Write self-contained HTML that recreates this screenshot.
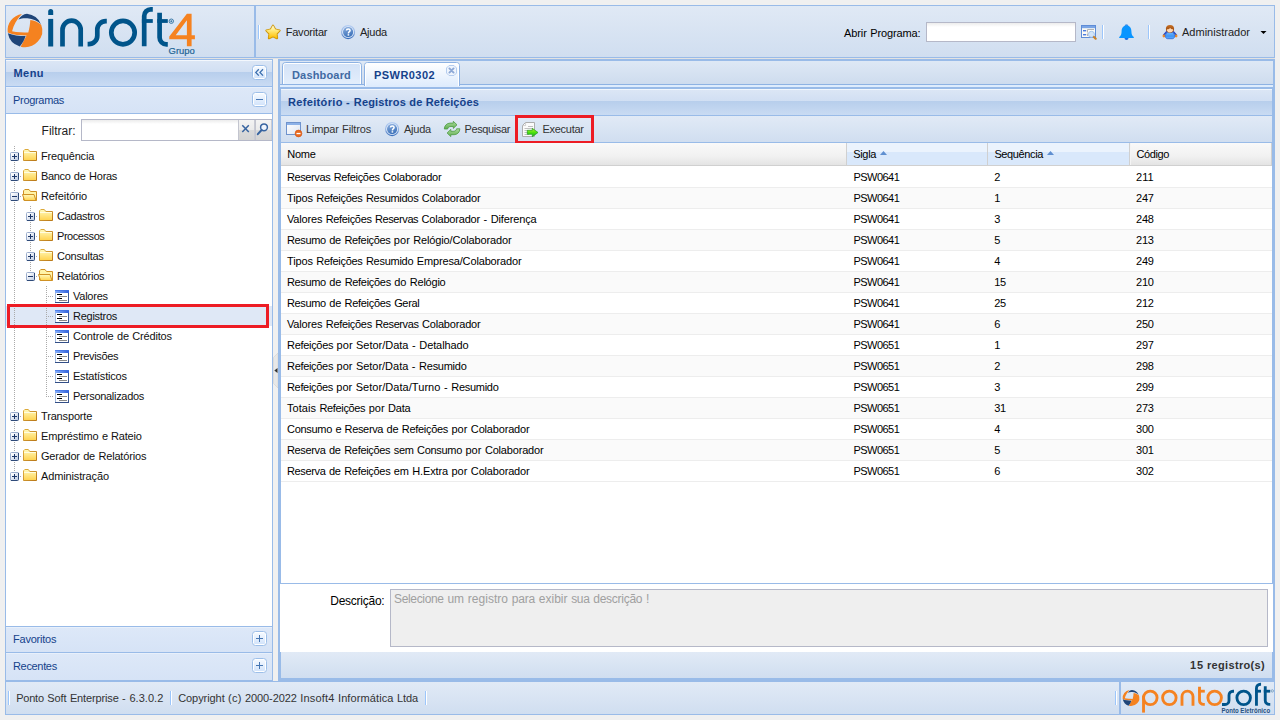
<!DOCTYPE html>
<html><head><meta charset="utf-8"><title>Ponto Soft Enterprise</title>
<style>
html,body{margin:0;padding:0;}
body{width:1280px;height:720px;overflow:hidden;background:#f0f0f0;position:relative;font-family:"Liberation Sans",sans-serif;}
div{box-sizing:content-box;}
.t{position:absolute;white-space:pre;font-family:"Liberation Sans",sans-serif;}
.a{position:absolute;display:block;overflow:visible;}
</style></head><body>
<div style="position:absolute;left:5px;top:5px;width:1268px;height:51px;border:1px solid #99bbe8;background:linear-gradient(#e0e9f5,#d0def0);"></div>
<div style="position:absolute;left:254px;top:6px;width:2px;height:51px;background:#99bbe8;"></div>
<div style="position:absolute;left:5px;top:58px;width:1270px;height:1px;background:#e2e2e2;"></div>
<svg class="a" style="left:0px;top:0px" width="200" height="58"><path fill="#f58220" d="M30.3 19.9 C34 20.3 38.3 21.8 41.2 24.7 A17.6 16.7 0 0 1 20.6 46.7 L26.6 35.4 C20 35.4 13 34.8 7.72 32.4 A17 16.7 0 0 1 21.9 13.91 C17 19 13.4 25 12.1 31.2 C17 32.2 23 32.5 28.3 32.5 C29.5 28 30.1 24 30.3 19.9 Z"/><path fill="#1f4579" d="M18.4 19.4 C20.5 16.5 23.5 14.2 27 13.86 A17.6 16.7 0 0 1 40.94 24.2 C38 20.8 33 19 27.5 18.3 C24 18 21 18.5 18.4 19.4 Z"/><path fill="#1f4579" d="M7.86 33.3 C13 35.4 19 36.1 25.6 36.1 C24.5 40 22.5 43.5 19.8 46.42 A17 16.7 0 0 1 7.86 33.3 Z"/><path fill="#00548a" d="M48.2 15 V11.4 a2.5 2.5 0 0 1 5 0 V15 Z"/><rect x="48.2" y="18.9" width="5" height="27.6" fill="#00548a"/><path fill="none" stroke="#00548a" stroke-width="4.7" d="M62.5 46.5 V29.8 a9.1 9.1 0 0 1 18.2 0 V46.5"/><path fill="none" stroke="#00548a" stroke-width="4.7" d="M106.8 21.2 h-1 a8.5 8.5 0 0 0 -8.5 8.5 v6 a8.5 8.5 0 0 1 -8.5 8.5 h-1.2"/><circle cx="123" cy="32.6" r="11.7" fill="none" stroke="#00548a" stroke-width="4.7"/><path fill="none" stroke="#00548a" stroke-width="4.7" d="M144.2 46.3 V16 a6.7 6.7 0 0 1 6.7 -6.7 h1.9"/><rect x="141.9" y="19.1" width="10.9" height="3.8" fill="#00548a"/><path fill="none" stroke="#00548a" stroke-width="4.7" d="M159.6 12.8 V37.5 a6.8 6.8 0 0 0 6.8 6.8 h1.4"/><rect x="157.3" y="19.1" width="10.5" height="3.8" fill="#00548a"/><circle cx="171.3" cy="21.2" r="2.2" fill="none" stroke="#3a7aa8" stroke-width="1"/><circle cx="171.3" cy="21.2" r="1" fill="#3a7aa8"/><path fill="#f58220" d="M186.9 13.7 h4.7 v21.6 h3.3 v3.9 h-3.3 v7 h-4.7 v-7 h-17.6 v-2.6 Z M186.9 20.3 L175.7 35.3 h11.2 Z"/><text x="168.6" y="53.8" font-family="Liberation Sans,sans-serif" font-size="8.8" fill="#1f6596" stroke="#1f6596" stroke-width="0.2" textLength="26.2" lengthAdjust="spacingAndGlyphs">Grupo</text></svg>
<div style="position:absolute;left:258px;top:25px;width:1px;height:14px;background:#9cc6fb;"></div>
<div style="position:absolute;left:259px;top:25px;width:1px;height:14px;background:#fff;"></div>
<svg class="a" style="left:265px;top:24px" width="16" height="16"><defs><linearGradient id="g1" x1="0" y1="0" x2="0" y2="1"><stop offset="0" stop-color="#fffde0"/><stop offset="0.4" stop-color="#ffe979"/><stop offset="1" stop-color="#ffbf00"/></linearGradient></defs><path d="M8.00 1.70 L10.17 5.61 L14.56 6.47 L11.52 9.74 L12.06 14.18 L8.00 12.30 L3.94 14.18 L4.48 9.74 L1.44 6.47 L5.83 5.61 Z" fill="#cc9306" stroke="#cc9306" stroke-width="2.2" stroke-linejoin="round"/><path d="M8.00 1.70 L10.17 5.61 L14.56 6.47 L11.52 9.74 L12.06 14.18 L8.00 12.30 L3.94 14.18 L4.48 9.74 L1.44 6.47 L5.83 5.61 Z" fill="url(#g1)" stroke="url(#g1)" stroke-width="0.5" stroke-linejoin="round"/></svg>
<span class="t" style="left:285.70px;top:26px;font-size:11px;line-height:13px;color:#222;letter-spacing:-0.204px;">Favoritar</span>
<svg class="a" style="left:341px;top:25px" width="15" height="15"><defs><linearGradient id="g2" x1="0" y1="0" x2="0.3" y2="1"><stop offset="0" stop-color="#8db0e0"/><stop offset="1" stop-color="#3f74bb"/></linearGradient><linearGradient id="g3" x1="0" y1="0" x2="0" y2="1"><stop offset="0" stop-color="#b4cdf2"/><stop offset="0.55" stop-color="#8fb0e2"/><stop offset="1" stop-color="#3a6fbc"/></linearGradient></defs><circle cx="7.1" cy="7.1" r="6.5" fill="#e2ecf9" stroke="url(#g3)" stroke-width="1.1"/><circle cx="7.1" cy="7.1" r="5.1" fill="url(#g2)"/><path d="M5.5 5.6 C5.5 4.5 6.2 3.9 7.3 3.9 C8.4 3.9 9.1 4.5 9.1 5.4 C9.1 6.2 8.6 6.5 8.1 6.9 C7.6 7.3 7.4 7.6 7.4 8.4" fill="none" stroke="#fff" stroke-width="1.5"/><rect x="6.6" y="9.2" width="1.6" height="1.4" fill="#fff"/></svg>
<span class="t" style="left:360.00px;top:26px;font-size:11px;line-height:13px;color:#222;letter-spacing:-0.229px;">Ajuda</span>
<span class="t" style="left:843.90px;top:27px;font-size:11px;line-height:13px;color:#000;letter-spacing:-0.068px;">Abrir</span><span class="t" style="left:870.19px;top:27px;font-size:11px;line-height:13px;color:#000;letter-spacing:-0.128px;">Programa:</span>
<div style="position:absolute;left:926px;top:22px;width:148px;height:18px;border:1px solid #b5b8c8;background:linear-gradient(#ececec 0,#fff 4px,#fff);"></div>
<svg class="a" style="left:1081px;top:25px" width="17" height="16"><rect x="0.5" y="0.5" width="14" height="12" fill="#fbfaf5" stroke="#5e8cd6"/><rect x="1" y="1" width="13" height="2.2" fill="#7aa5e6"/><rect x="2" y="5" width="3.2" height="1.4" fill="#4a7ade"/><rect x="2" y="9" width="3.2" height="1.4" fill="#4a7ade"/><path d="M6.5 7.5 V4.5 H13 M6.5 11 V8.5" fill="none" stroke="#b4b4b4" stroke-width="1"/><circle cx="10.4" cy="9.3" r="3" fill="#d2e4f8" stroke="#a3c4ec" stroke-width="1"/><path d="M13 12 L14.7 13.7" stroke="#c98228" stroke-width="2.2" stroke-linecap="round"/></svg>
<div style="position:absolute;left:1102px;top:25px;width:1px;height:14px;background:#9cc6fb;"></div>
<div style="position:absolute;left:1103px;top:25px;width:1px;height:14px;background:#fff;"></div>
<svg class="a" style="left:1119px;top:24px" width="15" height="17"><circle cx="7.5" cy="2.2" r="1.9" fill="#4a8fe6"/><path d="M7.5 1.6 C10.8 1.6 12.3 4.2 12.4 7.2 C12.5 10 13 11.6 14.8 12.9 V14 H0.2 V12.9 C2 11.6 2.5 10 2.6 7.2 C2.7 4.2 4.2 1.6 7.5 1.6 Z" fill="#0a95ff"/><path d="M5.5 14 h4 a2 2 0 0 1 -4 0 Z" fill="#1a6fe8"/></svg>
<div style="position:absolute;left:1148px;top:25px;width:1px;height:14px;background:#9cc6fb;"></div>
<div style="position:absolute;left:1149px;top:25px;width:1px;height:14px;background:#fff;"></div>
<svg class="a" style="left:1162px;top:24px" width="16" height="17"><defs><linearGradient id="g4" x1="0" y1="0" x2="0" y2="1"><stop offset="0" stop-color="#6cb8ff"/><stop offset="0.6" stop-color="#3f94f5"/><stop offset="1" stop-color="#5fb0ff"/></linearGradient><linearGradient id="g5" x1="0" y1="0" x2="0" y2="1"><stop offset="0" stop-color="#c87024"/><stop offset="1" stop-color="#8c3c08"/></linearGradient></defs><path d="M4.6 7.7 L1.7 11 M11.4 7.7 L14.3 11" stroke="#2348c4" stroke-width="1.5" stroke-linecap="round"/><circle cx="1.9" cy="12" r="1.4" fill="#ee8a28"/><circle cx="14.1" cy="12" r="1.4" fill="#ee8a28"/><path d="M5.2 8.3 H10.8 L12.7 11 C13 13 12 14.7 10.5 14.7 H5.5 C4 14.7 3 13 3.3 11 Z" fill="url(#g4)" stroke="#2458cc" stroke-width="0.7"/><ellipse cx="8" cy="4.8" rx="4.1" ry="3.9" fill="url(#g5)"/><path d="M4.9 5.2 C6 5.4 7.3 4.9 8.2 4 C8.8 4.9 10 5.4 11.1 5.3 C11.3 7.3 9.8 8.6 8 8.6 C6.2 8.6 4.7 7.3 4.9 5.2 Z" fill="#fcd9b6"/></svg>
<span class="t" style="left:1182.00px;top:26px;font-size:11px;line-height:13px;color:#222;letter-spacing:0.011px;">Administrador</span>
<svg class="a" style="left:1260px;top:31px" width="7" height="4"><path d="M0.5 0h6L3.5 3z" fill="#000"/></svg>
<div style="position:absolute;left:5px;top:59px;width:266px;height:620px;border:1px solid #99bbe8;background:#fff;"></div>
<div style="position:absolute;left:6px;top:60px;width:266px;height:26px;background:linear-gradient(#dbe6f5 0,#d1dff3 11px,#b7ceec 11px,#c9dbf3 100%);border-top:1px solid #f4f8fd;box-sizing:border-box;"></div>
<div style="position:absolute;left:6px;top:86px;width:266px;height:1px;background:#99bbe8;"></div>
<span class="t" style="left:13.50px;top:67px;font-size:11px;line-height:13px;color:#15428b;font-weight:bold;letter-spacing:0.445px;">Menu</span>
<svg class="a" style="left:252px;top:65px" width="15" height="15"><rect x="0.5" y="0.5" width="14" height="14" rx="3" ry="3" fill="#fff" stroke="#9dbfe9"/><defs><linearGradient id="g6" x1="0" y1="0" x2="0" y2="1"><stop offset="0" stop-color="#f4f9ff"/><stop offset="1" stop-color="#d3e4fb"/></linearGradient></defs><rect x="2" y="2" width="11" height="11" rx="1" fill="url(#g6)"/><path d="M6.8 4.2 L3.8 7.4 L6.8 10.6 M11 4.2 L8 7.4 L11 10.6" fill="none" stroke="#3b6fae" stroke-width="1.3"/></svg>
<div style="position:absolute;left:6px;top:87px;width:266px;height:26px;background:linear-gradient(#dde8f8,#d6e3f6);border-top:1px solid #e8f0fb;box-sizing:border-box;"></div>
<div style="position:absolute;left:6px;top:113px;width:266px;height:1px;background:#99bbe8;"></div>
<span class="t" style="left:13.00px;top:94px;font-size:11px;line-height:13px;color:#15428b;letter-spacing:-0.311px;">Programas</span>
<svg class="a" style="left:252px;top:92px" width="15" height="15"><rect x="0.5" y="0.5" width="14" height="14" rx="3" ry="3" fill="#fff" stroke="#9dbfe9"/><defs><linearGradient id="g7" x1="0" y1="0" x2="0" y2="1"><stop offset="0" stop-color="#f4f9ff"/><stop offset="1" stop-color="#d3e4fb"/></linearGradient></defs><rect x="2" y="2" width="11" height="11" rx="1" fill="url(#g7)"/><rect x="4" y="7" width="7" height="1" fill="#4878b6"/></svg>
<span class="t" style="left:41.60px;top:124px;font-size:12px;line-height:14px;color:#222;letter-spacing:-0.013px;">Filtrar:</span>
<div style="position:absolute;left:81px;top:119px;width:156px;height:20px;border:1px solid #b5b8c8;background:linear-gradient(#ececec 0,#fff 4px,#fff);"></div>
<svg class="a" style="left:238px;top:119px" width="17" height="22"><defs><linearGradient id="g8" x1="0" y1="0" x2="0" y2="1"><stop offset="0" stop-color="#f4f4f4"/><stop offset="0.48" stop-color="#ebebeb"/><stop offset="0.52" stop-color="#dadada"/><stop offset="1" stop-color="#d3d3d3"/></linearGradient></defs><rect x="0" y="0" width="17" height="22" fill="url(#g8)"/><rect x="0" y="0" width="17" height="1" fill="#b5b8c8"/><rect x="0" y="21" width="17" height="1" fill="#b5b8c8"/><rect x="0" y="1" width="1" height="20" fill="#c3c5cf"/><rect x="16" y="1" width="1" height="20" fill="#c9cbd4"/><path d="M4.3 6.3 L10.8 13 M10.8 6.3 L4.3 13" stroke="#3764a0" stroke-width="1.5"/></svg>
<svg class="a" style="left:255px;top:119px" width="17" height="22"><defs><linearGradient id="g9" x1="0" y1="0" x2="0" y2="1"><stop offset="0" stop-color="#f4f4f4"/><stop offset="0.48" stop-color="#ebebeb"/><stop offset="0.52" stop-color="#dadada"/><stop offset="1" stop-color="#d3d3d3"/></linearGradient></defs><rect x="0" y="0" width="17" height="22" fill="url(#g9)"/><rect x="0" y="0" width="17" height="1" fill="#b5b8c8"/><rect x="0" y="21" width="17" height="1" fill="#b5b8c8"/><rect x="0" y="1" width="1" height="20" fill="#c3c5cf"/><rect x="16" y="1" width="1" height="20" fill="#c9cbd4"/><circle cx="9" cy="8.3" r="3.4" fill="#eef4fc" stroke="#3764a0" stroke-width="1.5"/><path d="M6.6 11 L2.8 15.2" stroke="#3764a0" stroke-width="2" stroke-linecap="round"/></svg>
<div style="position:absolute;left:6px;top:306px;width:266px;height:20px;background:#dfe8f6;"></div>
<div style="position:absolute;left:14px;top:146px;width:1px;height:326px;background-image:linear-gradient(#aaa 50%,transparent 50%);background-size:1px 2px;"></div>
<div style="position:absolute;left:30px;top:206px;width:1px;height:66px;background-image:linear-gradient(#aaa 50%,transparent 50%);background-size:1px 2px;"></div>
<div style="position:absolute;left:46px;top:286px;width:1px;height:111px;background-image:linear-gradient(#aaa 50%,transparent 50%);background-size:1px 2px;"></div>
<div style="position:absolute;left:20px;top:156px;width:1px;height:1px;background:#aaa;"></div>
<svg class="a" style="left:10px;top:152px" width="9" height="9"><defs><linearGradient id="g10" x1="0" y1="0" x2="1" y2="1"><stop offset="0.15" stop-color="#fff"/><stop offset="1" stop-color="#b9c7e0"/></linearGradient></defs><rect x="0.5" y="0.5" width="8" height="8" rx="1" fill="url(#g10)"/><path d="M0.5 8 V1.5 Q0.5 0.5 1.5 0.5 H8" fill="none" stroke="#9badcd"/><path d="M8.5 0.8 V7.5 Q8.5 8.5 7.5 8.5 H0.8" fill="none" stroke="#2f4b7a"/><rect x="2" y="4" width="5" height="1" fill="#1d3768"/><rect x="4" y="2" width="1" height="5" fill="#1d3768"/></svg>
<svg class="a" style="left:22px;top:148px" width="16" height="16"><defs><linearGradient id="g11" x1="0" y1="0" x2="0" y2="1"><stop offset="0" stop-color="#fffbc0"/><stop offset="1" stop-color="#ffd24d"/></linearGradient><linearGradient id="g12" x1="0" y1="0" x2="1" y2="1"><stop offset="0" stop-color="#e0b040"/><stop offset="1" stop-color="#b9781a"/></linearGradient></defs><path d="M1.5 12.5 V2.8 L2.8 1.5 H6.3 L7.8 3.5 H14.5 V12.5 Z" fill="url(#g11)" stroke="url(#g12)" stroke-linejoin="round"/><path d="M2 4.5 H14" stroke="#fffde0" stroke-width="1"/></svg>
<span class="t" style="left:41.00px;top:150px;font-size:11px;line-height:13px;color:#111;letter-spacing:-0.194px;">Frequência</span>
<div style="position:absolute;left:20px;top:176px;width:1px;height:1px;background:#aaa;"></div>
<svg class="a" style="left:10px;top:172px" width="9" height="9"><defs><linearGradient id="g13" x1="0" y1="0" x2="1" y2="1"><stop offset="0.15" stop-color="#fff"/><stop offset="1" stop-color="#b9c7e0"/></linearGradient></defs><rect x="0.5" y="0.5" width="8" height="8" rx="1" fill="url(#g13)"/><path d="M0.5 8 V1.5 Q0.5 0.5 1.5 0.5 H8" fill="none" stroke="#9badcd"/><path d="M8.5 0.8 V7.5 Q8.5 8.5 7.5 8.5 H0.8" fill="none" stroke="#2f4b7a"/><rect x="2" y="4" width="5" height="1" fill="#1d3768"/><rect x="4" y="2" width="1" height="5" fill="#1d3768"/></svg>
<svg class="a" style="left:22px;top:168px" width="16" height="16"><defs><linearGradient id="g14" x1="0" y1="0" x2="0" y2="1"><stop offset="0" stop-color="#fffbc0"/><stop offset="1" stop-color="#ffd24d"/></linearGradient><linearGradient id="g15" x1="0" y1="0" x2="1" y2="1"><stop offset="0" stop-color="#e0b040"/><stop offset="1" stop-color="#b9781a"/></linearGradient></defs><path d="M1.5 12.5 V2.8 L2.8 1.5 H6.3 L7.8 3.5 H14.5 V12.5 Z" fill="url(#g14)" stroke="url(#g15)" stroke-linejoin="round"/><path d="M2 4.5 H14" stroke="#fffde0" stroke-width="1"/></svg>
<span class="t" style="left:41.00px;top:170px;font-size:11px;line-height:13px;color:#111;letter-spacing:-0.361px;">Banco</span><span class="t" style="left:73.82px;top:170px;font-size:11px;line-height:13px;color:#111;letter-spacing:-0.193px;">de</span><span class="t" style="left:89.11px;top:170px;font-size:11px;line-height:13px;color:#111;letter-spacing:-0.270px;">Horas</span>
<div style="position:absolute;left:20px;top:196px;width:1px;height:1px;background:#aaa;"></div>
<svg class="a" style="left:10px;top:192px" width="9" height="9"><defs><linearGradient id="g16" x1="0" y1="0" x2="1" y2="1"><stop offset="0.15" stop-color="#fff"/><stop offset="1" stop-color="#b9c7e0"/></linearGradient></defs><rect x="0.5" y="0.5" width="8" height="8" rx="1" fill="url(#g16)"/><path d="M0.5 8 V1.5 Q0.5 0.5 1.5 0.5 H8" fill="none" stroke="#9badcd"/><path d="M8.5 0.8 V7.5 Q8.5 8.5 7.5 8.5 H0.8" fill="none" stroke="#2f4b7a"/><rect x="2" y="4" width="5" height="1" fill="#1d3768"/></svg>
<svg class="a" style="left:22px;top:188px" width="16" height="16"><defs><linearGradient id="g17" x1="0" y1="0" x2="0" y2="1"><stop offset="0" stop-color="#fffbc0"/><stop offset="1" stop-color="#ffd24d"/></linearGradient></defs><path d="M1.5 12 V2.8 L2.8 1.5 H7 L8.5 3.5 H14.5 V12.5 H2 Z" fill="#fff3a8" stroke="#cf9124" stroke-linejoin="round"/><path d="M0.5 6.5 H12 L14 12.5 H2.5 Z" fill="url(#g17)" stroke="#cf9124" stroke-linejoin="round"/></svg>
<span class="t" style="left:41.00px;top:190px;font-size:11px;line-height:13px;color:#111;letter-spacing:-0.098px;">Refeitório</span>
<div style="position:absolute;left:36px;top:216px;width:1px;height:1px;background:#aaa;"></div>
<svg class="a" style="left:26px;top:212px" width="9" height="9"><defs><linearGradient id="g18" x1="0" y1="0" x2="1" y2="1"><stop offset="0.15" stop-color="#fff"/><stop offset="1" stop-color="#b9c7e0"/></linearGradient></defs><rect x="0.5" y="0.5" width="8" height="8" rx="1" fill="url(#g18)"/><path d="M0.5 8 V1.5 Q0.5 0.5 1.5 0.5 H8" fill="none" stroke="#9badcd"/><path d="M8.5 0.8 V7.5 Q8.5 8.5 7.5 8.5 H0.8" fill="none" stroke="#2f4b7a"/><rect x="2" y="4" width="5" height="1" fill="#1d3768"/><rect x="4" y="2" width="1" height="5" fill="#1d3768"/></svg>
<svg class="a" style="left:38px;top:208px" width="16" height="16"><defs><linearGradient id="g19" x1="0" y1="0" x2="0" y2="1"><stop offset="0" stop-color="#fffbc0"/><stop offset="1" stop-color="#ffd24d"/></linearGradient><linearGradient id="g20" x1="0" y1="0" x2="1" y2="1"><stop offset="0" stop-color="#e0b040"/><stop offset="1" stop-color="#b9781a"/></linearGradient></defs><path d="M1.5 12.5 V2.8 L2.8 1.5 H6.3 L7.8 3.5 H14.5 V12.5 Z" fill="url(#g19)" stroke="url(#g20)" stroke-linejoin="round"/><path d="M2 4.5 H14" stroke="#fffde0" stroke-width="1"/></svg>
<span class="t" style="left:57.00px;top:210px;font-size:11px;line-height:13px;color:#111;letter-spacing:-0.304px;">Cadastros</span>
<div style="position:absolute;left:36px;top:236px;width:1px;height:1px;background:#aaa;"></div>
<svg class="a" style="left:26px;top:232px" width="9" height="9"><defs><linearGradient id="g21" x1="0" y1="0" x2="1" y2="1"><stop offset="0.15" stop-color="#fff"/><stop offset="1" stop-color="#b9c7e0"/></linearGradient></defs><rect x="0.5" y="0.5" width="8" height="8" rx="1" fill="url(#g21)"/><path d="M0.5 8 V1.5 Q0.5 0.5 1.5 0.5 H8" fill="none" stroke="#9badcd"/><path d="M8.5 0.8 V7.5 Q8.5 8.5 7.5 8.5 H0.8" fill="none" stroke="#2f4b7a"/><rect x="2" y="4" width="5" height="1" fill="#1d3768"/><rect x="4" y="2" width="1" height="5" fill="#1d3768"/></svg>
<svg class="a" style="left:38px;top:228px" width="16" height="16"><defs><linearGradient id="g22" x1="0" y1="0" x2="0" y2="1"><stop offset="0" stop-color="#fffbc0"/><stop offset="1" stop-color="#ffd24d"/></linearGradient><linearGradient id="g23" x1="0" y1="0" x2="1" y2="1"><stop offset="0" stop-color="#e0b040"/><stop offset="1" stop-color="#b9781a"/></linearGradient></defs><path d="M1.5 12.5 V2.8 L2.8 1.5 H6.3 L7.8 3.5 H14.5 V12.5 Z" fill="url(#g22)" stroke="url(#g23)" stroke-linejoin="round"/><path d="M2 4.5 H14" stroke="#fffde0" stroke-width="1"/></svg>
<span class="t" style="left:57.00px;top:230px;font-size:11px;line-height:13px;color:#111;letter-spacing:-0.439px;">Processos</span>
<div style="position:absolute;left:36px;top:256px;width:1px;height:1px;background:#aaa;"></div>
<svg class="a" style="left:26px;top:252px" width="9" height="9"><defs><linearGradient id="g24" x1="0" y1="0" x2="1" y2="1"><stop offset="0.15" stop-color="#fff"/><stop offset="1" stop-color="#b9c7e0"/></linearGradient></defs><rect x="0.5" y="0.5" width="8" height="8" rx="1" fill="url(#g24)"/><path d="M0.5 8 V1.5 Q0.5 0.5 1.5 0.5 H8" fill="none" stroke="#9badcd"/><path d="M8.5 0.8 V7.5 Q8.5 8.5 7.5 8.5 H0.8" fill="none" stroke="#2f4b7a"/><rect x="2" y="4" width="5" height="1" fill="#1d3768"/><rect x="4" y="2" width="1" height="5" fill="#1d3768"/></svg>
<svg class="a" style="left:38px;top:248px" width="16" height="16"><defs><linearGradient id="g25" x1="0" y1="0" x2="0" y2="1"><stop offset="0" stop-color="#fffbc0"/><stop offset="1" stop-color="#ffd24d"/></linearGradient><linearGradient id="g26" x1="0" y1="0" x2="1" y2="1"><stop offset="0" stop-color="#e0b040"/><stop offset="1" stop-color="#b9781a"/></linearGradient></defs><path d="M1.5 12.5 V2.8 L2.8 1.5 H6.3 L7.8 3.5 H14.5 V12.5 Z" fill="url(#g25)" stroke="url(#g26)" stroke-linejoin="round"/><path d="M2 4.5 H14" stroke="#fffde0" stroke-width="1"/></svg>
<span class="t" style="left:57.00px;top:250px;font-size:11px;line-height:13px;color:#111;letter-spacing:-0.268px;">Consultas</span>
<div style="position:absolute;left:36px;top:276px;width:1px;height:1px;background:#aaa;"></div>
<svg class="a" style="left:26px;top:272px" width="9" height="9"><defs><linearGradient id="g27" x1="0" y1="0" x2="1" y2="1"><stop offset="0.15" stop-color="#fff"/><stop offset="1" stop-color="#b9c7e0"/></linearGradient></defs><rect x="0.5" y="0.5" width="8" height="8" rx="1" fill="url(#g27)"/><path d="M0.5 8 V1.5 Q0.5 0.5 1.5 0.5 H8" fill="none" stroke="#9badcd"/><path d="M8.5 0.8 V7.5 Q8.5 8.5 7.5 8.5 H0.8" fill="none" stroke="#2f4b7a"/><rect x="2" y="4" width="5" height="1" fill="#1d3768"/></svg>
<svg class="a" style="left:38px;top:268px" width="16" height="16"><defs><linearGradient id="g28" x1="0" y1="0" x2="0" y2="1"><stop offset="0" stop-color="#fffbc0"/><stop offset="1" stop-color="#ffd24d"/></linearGradient></defs><path d="M1.5 12 V2.8 L2.8 1.5 H7 L8.5 3.5 H14.5 V12.5 H2 Z" fill="#fff3a8" stroke="#cf9124" stroke-linejoin="round"/><path d="M0.5 6.5 H12 L14 12.5 H2.5 Z" fill="url(#g28)" stroke="#cf9124" stroke-linejoin="round"/></svg>
<span class="t" style="left:57.00px;top:270px;font-size:11px;line-height:13px;color:#111;letter-spacing:-0.212px;">Relatórios</span>
<div style="position:absolute;left:48px;top:296px;width:6px;height:1px;background-image:linear-gradient(90deg,#aaa 50%,transparent 50%);background-size:2px 1px;"></div>
<svg class="a" style="left:54px;top:288px" width="16" height="16"><defs><linearGradient id="g29" x1="0" y1="0" x2="1" y2="0"><stop offset="0" stop-color="#86aef8"/><stop offset="1" stop-color="#2f60dc"/></linearGradient></defs><rect x="1" y="2" width="14" height="13" fill="#fff"/><rect x="1" y="2" width="14" height="3" fill="url(#g29)"/><rect x="1" y="2" width="14" height="1" fill="#3f6fe2" opacity="0.7"/><rect x="1" y="5" width="1" height="10" fill="#a3b8da"/><rect x="14" y="5" width="1" height="10" fill="#3d5994"/><rect x="1" y="14" width="14" height="1" fill="#324e86"/><rect x="3" y="6" width="5" height="1" fill="#000"/><rect x="5" y="8" width="8" height="1" fill="#8a8a8a"/><rect x="3" y="10" width="5" height="1" fill="#000"/><rect x="5" y="12" width="8" height="1" fill="#8a8a8a"/></svg>
<span class="t" style="left:73.00px;top:290px;font-size:11px;line-height:13px;color:#111;letter-spacing:-0.240px;">Valores</span>
<div style="position:absolute;left:48px;top:316px;width:6px;height:1px;background-image:linear-gradient(90deg,#aaa 50%,transparent 50%);background-size:2px 1px;"></div>
<svg class="a" style="left:54px;top:308px" width="16" height="16"><defs><linearGradient id="g30" x1="0" y1="0" x2="1" y2="0"><stop offset="0" stop-color="#86aef8"/><stop offset="1" stop-color="#2f60dc"/></linearGradient></defs><rect x="1" y="2" width="14" height="13" fill="#fff"/><rect x="1" y="2" width="14" height="3" fill="url(#g30)"/><rect x="1" y="2" width="14" height="1" fill="#3f6fe2" opacity="0.7"/><rect x="1" y="5" width="1" height="10" fill="#a3b8da"/><rect x="14" y="5" width="1" height="10" fill="#3d5994"/><rect x="1" y="14" width="14" height="1" fill="#324e86"/><rect x="3" y="6" width="5" height="1" fill="#000"/><rect x="5" y="8" width="8" height="1" fill="#8a8a8a"/><rect x="3" y="10" width="5" height="1" fill="#000"/><rect x="5" y="12" width="8" height="1" fill="#8a8a8a"/></svg>
<span class="t" style="left:73.00px;top:310px;font-size:11px;line-height:13px;color:#111;letter-spacing:-0.262px;">Registros</span>
<div style="position:absolute;left:48px;top:336px;width:6px;height:1px;background-image:linear-gradient(90deg,#aaa 50%,transparent 50%);background-size:2px 1px;"></div>
<svg class="a" style="left:54px;top:328px" width="16" height="16"><defs><linearGradient id="g31" x1="0" y1="0" x2="1" y2="0"><stop offset="0" stop-color="#86aef8"/><stop offset="1" stop-color="#2f60dc"/></linearGradient></defs><rect x="1" y="2" width="14" height="13" fill="#fff"/><rect x="1" y="2" width="14" height="3" fill="url(#g31)"/><rect x="1" y="2" width="14" height="1" fill="#3f6fe2" opacity="0.7"/><rect x="1" y="5" width="1" height="10" fill="#a3b8da"/><rect x="14" y="5" width="1" height="10" fill="#3d5994"/><rect x="1" y="14" width="14" height="1" fill="#324e86"/><rect x="3" y="6" width="5" height="1" fill="#000"/><rect x="5" y="8" width="8" height="1" fill="#8a8a8a"/><rect x="3" y="10" width="5" height="1" fill="#000"/><rect x="5" y="12" width="8" height="1" fill="#8a8a8a"/></svg>
<span class="t" style="left:73.00px;top:330px;font-size:11px;line-height:13px;color:#111;letter-spacing:-0.123px;">Controle</span><span class="t" style="left:117.03px;top:330px;font-size:11px;line-height:13px;color:#111;letter-spacing:-0.189px;">de</span><span class="t" style="left:132.33px;top:330px;font-size:11px;line-height:13px;color:#111;letter-spacing:-0.186px;">Créditos</span>
<div style="position:absolute;left:48px;top:356px;width:6px;height:1px;background-image:linear-gradient(90deg,#aaa 50%,transparent 50%);background-size:2px 1px;"></div>
<svg class="a" style="left:54px;top:348px" width="16" height="16"><defs><linearGradient id="g32" x1="0" y1="0" x2="1" y2="0"><stop offset="0" stop-color="#86aef8"/><stop offset="1" stop-color="#2f60dc"/></linearGradient></defs><rect x="1" y="2" width="14" height="13" fill="#fff"/><rect x="1" y="2" width="14" height="3" fill="url(#g32)"/><rect x="1" y="2" width="14" height="1" fill="#3f6fe2" opacity="0.7"/><rect x="1" y="5" width="1" height="10" fill="#a3b8da"/><rect x="14" y="5" width="1" height="10" fill="#3d5994"/><rect x="1" y="14" width="14" height="1" fill="#324e86"/><rect x="3" y="6" width="5" height="1" fill="#000"/><rect x="5" y="8" width="8" height="1" fill="#8a8a8a"/><rect x="3" y="10" width="5" height="1" fill="#000"/><rect x="5" y="12" width="8" height="1" fill="#8a8a8a"/></svg>
<span class="t" style="left:73.00px;top:350px;font-size:11px;line-height:13px;color:#111;letter-spacing:-0.344px;">Previsões</span>
<div style="position:absolute;left:48px;top:376px;width:6px;height:1px;background-image:linear-gradient(90deg,#aaa 50%,transparent 50%);background-size:2px 1px;"></div>
<svg class="a" style="left:54px;top:368px" width="16" height="16"><defs><linearGradient id="g33" x1="0" y1="0" x2="1" y2="0"><stop offset="0" stop-color="#86aef8"/><stop offset="1" stop-color="#2f60dc"/></linearGradient></defs><rect x="1" y="2" width="14" height="13" fill="#fff"/><rect x="1" y="2" width="14" height="3" fill="url(#g33)"/><rect x="1" y="2" width="14" height="1" fill="#3f6fe2" opacity="0.7"/><rect x="1" y="5" width="1" height="10" fill="#a3b8da"/><rect x="14" y="5" width="1" height="10" fill="#3d5994"/><rect x="1" y="14" width="14" height="1" fill="#324e86"/><rect x="3" y="6" width="5" height="1" fill="#000"/><rect x="5" y="8" width="8" height="1" fill="#8a8a8a"/><rect x="3" y="10" width="5" height="1" fill="#000"/><rect x="5" y="12" width="8" height="1" fill="#8a8a8a"/></svg>
<span class="t" style="left:73.00px;top:370px;font-size:11px;line-height:13px;color:#111;letter-spacing:-0.212px;">Estatísticos</span>
<div style="position:absolute;left:48px;top:396px;width:6px;height:1px;background-image:linear-gradient(90deg,#aaa 50%,transparent 50%);background-size:2px 1px;"></div>
<svg class="a" style="left:54px;top:388px" width="16" height="16"><defs><linearGradient id="g34" x1="0" y1="0" x2="1" y2="0"><stop offset="0" stop-color="#86aef8"/><stop offset="1" stop-color="#2f60dc"/></linearGradient></defs><rect x="1" y="2" width="14" height="13" fill="#fff"/><rect x="1" y="2" width="14" height="3" fill="url(#g34)"/><rect x="1" y="2" width="14" height="1" fill="#3f6fe2" opacity="0.7"/><rect x="1" y="5" width="1" height="10" fill="#a3b8da"/><rect x="14" y="5" width="1" height="10" fill="#3d5994"/><rect x="1" y="14" width="14" height="1" fill="#324e86"/><rect x="3" y="6" width="5" height="1" fill="#000"/><rect x="5" y="8" width="8" height="1" fill="#8a8a8a"/><rect x="3" y="10" width="5" height="1" fill="#000"/><rect x="5" y="12" width="8" height="1" fill="#8a8a8a"/></svg>
<span class="t" style="left:73.00px;top:390px;font-size:11px;line-height:13px;color:#111;letter-spacing:-0.301px;">Personalizados</span>
<div style="position:absolute;left:20px;top:416px;width:1px;height:1px;background:#aaa;"></div>
<svg class="a" style="left:10px;top:412px" width="9" height="9"><defs><linearGradient id="g35" x1="0" y1="0" x2="1" y2="1"><stop offset="0.15" stop-color="#fff"/><stop offset="1" stop-color="#b9c7e0"/></linearGradient></defs><rect x="0.5" y="0.5" width="8" height="8" rx="1" fill="url(#g35)"/><path d="M0.5 8 V1.5 Q0.5 0.5 1.5 0.5 H8" fill="none" stroke="#9badcd"/><path d="M8.5 0.8 V7.5 Q8.5 8.5 7.5 8.5 H0.8" fill="none" stroke="#2f4b7a"/><rect x="2" y="4" width="5" height="1" fill="#1d3768"/><rect x="4" y="2" width="1" height="5" fill="#1d3768"/></svg>
<svg class="a" style="left:22px;top:408px" width="16" height="16"><defs><linearGradient id="g36" x1="0" y1="0" x2="0" y2="1"><stop offset="0" stop-color="#fffbc0"/><stop offset="1" stop-color="#ffd24d"/></linearGradient><linearGradient id="g37" x1="0" y1="0" x2="1" y2="1"><stop offset="0" stop-color="#e0b040"/><stop offset="1" stop-color="#b9781a"/></linearGradient></defs><path d="M1.5 12.5 V2.8 L2.8 1.5 H6.3 L7.8 3.5 H14.5 V12.5 Z" fill="url(#g36)" stroke="url(#g37)" stroke-linejoin="round"/><path d="M2 4.5 H14" stroke="#fffde0" stroke-width="1"/></svg>
<span class="t" style="left:41.00px;top:410px;font-size:11px;line-height:13px;color:#111;letter-spacing:-0.158px;">Transporte</span>
<div style="position:absolute;left:20px;top:436px;width:1px;height:1px;background:#aaa;"></div>
<svg class="a" style="left:10px;top:432px" width="9" height="9"><defs><linearGradient id="g38" x1="0" y1="0" x2="1" y2="1"><stop offset="0.15" stop-color="#fff"/><stop offset="1" stop-color="#b9c7e0"/></linearGradient></defs><rect x="0.5" y="0.5" width="8" height="8" rx="1" fill="url(#g38)"/><path d="M0.5 8 V1.5 Q0.5 0.5 1.5 0.5 H8" fill="none" stroke="#9badcd"/><path d="M8.5 0.8 V7.5 Q8.5 8.5 7.5 8.5 H0.8" fill="none" stroke="#2f4b7a"/><rect x="2" y="4" width="5" height="1" fill="#1d3768"/><rect x="4" y="2" width="1" height="5" fill="#1d3768"/></svg>
<svg class="a" style="left:22px;top:428px" width="16" height="16"><defs><linearGradient id="g39" x1="0" y1="0" x2="0" y2="1"><stop offset="0" stop-color="#fffbc0"/><stop offset="1" stop-color="#ffd24d"/></linearGradient><linearGradient id="g40" x1="0" y1="0" x2="1" y2="1"><stop offset="0" stop-color="#e0b040"/><stop offset="1" stop-color="#b9781a"/></linearGradient></defs><path d="M1.5 12.5 V2.8 L2.8 1.5 H6.3 L7.8 3.5 H14.5 V12.5 Z" fill="url(#g39)" stroke="url(#g40)" stroke-linejoin="round"/><path d="M2 4.5 H14" stroke="#fffde0" stroke-width="1"/></svg>
<span class="t" style="left:41.00px;top:430px;font-size:11px;line-height:13px;color:#111;letter-spacing:-0.123px;">Empréstimo</span><span class="t" style="left:101.89px;top:430px;font-size:11px;line-height:13px;color:#111;letter-spacing:-0.342px;">e</span><span class="t" style="left:111.10px;top:430px;font-size:11px;line-height:13px;color:#111;letter-spacing:-0.216px;">Rateio</span>
<div style="position:absolute;left:20px;top:456px;width:1px;height:1px;background:#aaa;"></div>
<svg class="a" style="left:10px;top:452px" width="9" height="9"><defs><linearGradient id="g41" x1="0" y1="0" x2="1" y2="1"><stop offset="0.15" stop-color="#fff"/><stop offset="1" stop-color="#b9c7e0"/></linearGradient></defs><rect x="0.5" y="0.5" width="8" height="8" rx="1" fill="url(#g41)"/><path d="M0.5 8 V1.5 Q0.5 0.5 1.5 0.5 H8" fill="none" stroke="#9badcd"/><path d="M8.5 0.8 V7.5 Q8.5 8.5 7.5 8.5 H0.8" fill="none" stroke="#2f4b7a"/><rect x="2" y="4" width="5" height="1" fill="#1d3768"/><rect x="4" y="2" width="1" height="5" fill="#1d3768"/></svg>
<svg class="a" style="left:22px;top:448px" width="16" height="16"><defs><linearGradient id="g42" x1="0" y1="0" x2="0" y2="1"><stop offset="0" stop-color="#fffbc0"/><stop offset="1" stop-color="#ffd24d"/></linearGradient><linearGradient id="g43" x1="0" y1="0" x2="1" y2="1"><stop offset="0" stop-color="#e0b040"/><stop offset="1" stop-color="#b9781a"/></linearGradient></defs><path d="M1.5 12.5 V2.8 L2.8 1.5 H6.3 L7.8 3.5 H14.5 V12.5 Z" fill="url(#g42)" stroke="url(#g43)" stroke-linejoin="round"/><path d="M2 4.5 H14" stroke="#fffde0" stroke-width="1"/></svg>
<span class="t" style="left:41.00px;top:450px;font-size:11px;line-height:13px;color:#111;letter-spacing:-0.229px;">Gerador</span><span class="t" style="left:83.18px;top:450px;font-size:11px;line-height:13px;color:#111;letter-spacing:-0.203px;">de</span><span class="t" style="left:98.44px;top:450px;font-size:11px;line-height:13px;color:#111;letter-spacing:-0.176px;">Relatórios</span>
<div style="position:absolute;left:20px;top:476px;width:1px;height:1px;background:#aaa;"></div>
<svg class="a" style="left:10px;top:472px" width="9" height="9"><defs><linearGradient id="g44" x1="0" y1="0" x2="1" y2="1"><stop offset="0.15" stop-color="#fff"/><stop offset="1" stop-color="#b9c7e0"/></linearGradient></defs><rect x="0.5" y="0.5" width="8" height="8" rx="1" fill="url(#g44)"/><path d="M0.5 8 V1.5 Q0.5 0.5 1.5 0.5 H8" fill="none" stroke="#9badcd"/><path d="M8.5 0.8 V7.5 Q8.5 8.5 7.5 8.5 H0.8" fill="none" stroke="#2f4b7a"/><rect x="2" y="4" width="5" height="1" fill="#1d3768"/><rect x="4" y="2" width="1" height="5" fill="#1d3768"/></svg>
<svg class="a" style="left:22px;top:468px" width="16" height="16"><defs><linearGradient id="g45" x1="0" y1="0" x2="0" y2="1"><stop offset="0" stop-color="#fffbc0"/><stop offset="1" stop-color="#ffd24d"/></linearGradient><linearGradient id="g46" x1="0" y1="0" x2="1" y2="1"><stop offset="0" stop-color="#e0b040"/><stop offset="1" stop-color="#b9781a"/></linearGradient></defs><path d="M1.5 12.5 V2.8 L2.8 1.5 H6.3 L7.8 3.5 H14.5 V12.5 Z" fill="url(#g45)" stroke="url(#g46)" stroke-linejoin="round"/><path d="M2 4.5 H14" stroke="#fffde0" stroke-width="1"/></svg>
<span class="t" style="left:41.00px;top:470px;font-size:11px;line-height:13px;color:#111;letter-spacing:-0.138px;">Administração</span>
<div style="position:absolute;left:7px;top:304px;width:256px;height:18px;border:3px solid #ed1c24;"></div>
<div style="position:absolute;left:6px;top:626px;width:266px;height:1px;background:#99bbe8;"></div>
<div style="position:absolute;left:6px;top:627px;width:266px;height:25px;background:linear-gradient(#dde8f8,#d6e3f6);border-top:1px solid #e8f0fb;box-sizing:border-box;"></div>
<span class="t" style="left:13.00px;top:633px;font-size:11px;line-height:13px;color:#15428b;letter-spacing:-0.215px;">Favoritos</span>
<svg class="a" style="left:252px;top:631px" width="15" height="15"><rect x="0.5" y="0.5" width="14" height="14" rx="3" ry="3" fill="#fff" stroke="#9dbfe9"/><defs><linearGradient id="g47" x1="0" y1="0" x2="0" y2="1"><stop offset="0" stop-color="#f4f9ff"/><stop offset="1" stop-color="#d3e4fb"/></linearGradient></defs><rect x="2" y="2" width="11" height="11" rx="1" fill="url(#g47)"/><rect x="4" y="7" width="7" height="1" fill="#4676b2"/><rect x="7" y="4" width="1" height="7" fill="#4676b2"/></svg>
<div style="position:absolute;left:6px;top:652px;width:266px;height:1px;background:#99bbe8;"></div>
<div style="position:absolute;left:6px;top:653px;width:266px;height:27px;background:linear-gradient(#dde8f8,#d6e3f6);border-top:1px solid #e8f0fb;box-sizing:border-box;"></div>
<span class="t" style="left:13.00px;top:660px;font-size:11px;line-height:13px;color:#15428b;letter-spacing:-0.334px;">Recentes</span>
<svg class="a" style="left:252px;top:658px" width="15" height="15"><rect x="0.5" y="0.5" width="14" height="14" rx="3" ry="3" fill="#fff" stroke="#9dbfe9"/><defs><linearGradient id="g48" x1="0" y1="0" x2="0" y2="1"><stop offset="0" stop-color="#f4f9ff"/><stop offset="1" stop-color="#d3e4fb"/></linearGradient></defs><rect x="2" y="2" width="11" height="11" rx="1" fill="url(#g48)"/><rect x="4" y="7" width="7" height="1" fill="#4676b2"/><rect x="7" y="4" width="1" height="7" fill="#4676b2"/></svg>
<svg class="a" style="left:273px;top:353px" width="5" height="35"><path d="M5 0 L0.5 4.5 V30.5 L5 35 Z" fill="#e8e8e8" stroke="#d2d2d2" stroke-width="0.6"/><path d="M4.5 15 L1.3 17.5 L4.5 20 Z" fill="#333"/></svg>
<div style="position:absolute;left:278px;top:59px;width:997px;height:622px;background:#99bbe8;"></div>
<div style="position:absolute;left:280px;top:61px;width:993px;height:23px;background:linear-gradient(#dee8f5,#cedcee);"></div>
<div style="position:absolute;left:280px;top:84px;width:993px;height:1px;background:#8db2e3;"></div>
<div style="position:absolute;left:280px;top:85px;width:993px;height:2px;background:#deecfd;"></div>
<svg class="a" style="left:282px;top:62px" width="80" height="22"><defs><linearGradient id="g49" x1="0" y1="0" x2="0" y2="1"><stop offset="0" stop-color="#d3e2f7"/><stop offset="1" stop-color="#e3eefc"/></linearGradient></defs><path d="M0.5 22 V3.5 a3 3 0 0 1 3 -3 H76.5 a3 3 0 0 1 3 3 V22" fill="url(#g49)" stroke="#8db2e3"/><path d="M1.5 22 V3.5 a2 2 0 0 1 2 -2 H76.5 a2 2 0 0 1 2 2 V22" fill="none" stroke="#fff"/></svg>
<span class="t" style="left:292.00px;top:69px;font-size:11px;line-height:13px;color:#416aa3;font-weight:bold;letter-spacing:0.171px;">Dashboard</span>
<svg class="a" style="left:364px;top:62px" width="96" height="24"><defs><linearGradient id="g50" x1="0" y1="0" x2="0" y2="1"><stop offset="0" stop-color="#fff"/><stop offset="1" stop-color="#deecfd"/></linearGradient></defs><path d="M0.5 24 V3.5 a3 3 0 0 1 3 -3 H92.5 a3 3 0 0 1 3 3 V24" fill="url(#g50)" stroke="#8db2e3"/><path d="M1.5 24 V3.5 a2 2 0 0 1 2 -2 H92.5 a2 2 0 0 1 2 2 V24" fill="none" stroke="#fff"/></svg>
<span class="t" style="left:374.00px;top:69px;font-size:11px;line-height:13px;color:#15428b;font-weight:bold;letter-spacing:0.441px;">PSWR0302</span>
<svg class="a" style="left:446px;top:65px" width="11" height="11"><path d="M3 0.5 H8 L10.5 3 V8 L8 10.5 H3 L0.5 8 V3 Z" fill="#eff5fd" stroke="#b5cdef" stroke-linejoin="round"/><path d="M3.4 3.4 L7.6 7.6 M7.6 3.4 L3.4 7.6" stroke="#8ca8d6" stroke-width="1.9" stroke-linecap="round"/></svg>
<div style="position:absolute;left:281px;top:89px;width:991px;height:26px;background:linear-gradient(#dbe6f5 0,#d1dff3 11px,#b7ceec 11px,#c9dbf3 100%);border-top:1px solid #f2f7fd;box-sizing:border-box;"></div>
<span class="t" style="left:288.00px;top:96px;font-size:11px;line-height:13px;color:#15428b;font-weight:bold;letter-spacing:0.335px;">Refeitório</span><span class="t" style="left:345.90px;top:96px;font-size:11px;line-height:13px;color:#15428b;font-weight:bold;letter-spacing:1.055px;">-</span><span class="t" style="left:353.83px;top:96px;font-size:11px;line-height:13px;color:#15428b;font-weight:bold;letter-spacing:0.151px;">Registros</span><span class="t" style="left:409.14px;top:96px;font-size:11px;line-height:13px;color:#15428b;font-weight:bold;letter-spacing:0.291px;">de</span><span class="t" style="left:425.78px;top:96px;font-size:11px;line-height:13px;color:#15428b;font-weight:bold;letter-spacing:0.139px;">Refeições</span>
<div style="position:absolute;left:281px;top:116px;width:991px;height:26px;background:linear-gradient(#e1eaf6,#d0def0);"></div>
<svg class="a" style="left:286px;top:122px" width="16" height="16"><defs><linearGradient id="g51" x1="0" y1="0" x2="1" y2="1"><stop offset="0" stop-color="#fff"/><stop offset="1" stop-color="#dde5f2"/></linearGradient></defs><rect x="0.5" y="0.5" width="14" height="12" fill="url(#g51)" stroke="#6f93cd"/><rect x="1" y="1" width="13" height="2" fill="#8db2e8"/><circle cx="12.5" cy="11.5" r="3.4" fill="#ea6a1e" stroke="#cf4f10" stroke-width="0.6"/><rect x="10.5" y="10.9" width="4" height="1.3" fill="#fff"/></svg>
<span class="t" style="left:306.00px;top:123px;font-size:11px;line-height:13px;color:#333;letter-spacing:-0.160px;">Limpar</span><span class="t" style="left:342.07px;top:123px;font-size:11px;line-height:13px;color:#333;letter-spacing:-0.144px;">Filtros</span>
<svg class="a" style="left:385px;top:122px" width="15" height="15"><defs><linearGradient id="g52" x1="0" y1="0" x2="0.3" y2="1"><stop offset="0" stop-color="#8db0e0"/><stop offset="1" stop-color="#3f74bb"/></linearGradient><linearGradient id="g53" x1="0" y1="0" x2="0" y2="1"><stop offset="0" stop-color="#b4cdf2"/><stop offset="0.55" stop-color="#8fb0e2"/><stop offset="1" stop-color="#3a6fbc"/></linearGradient></defs><circle cx="7.1" cy="7.1" r="6.5" fill="#e2ecf9" stroke="url(#g53)" stroke-width="1.1"/><circle cx="7.1" cy="7.1" r="5.1" fill="url(#g52)"/><path d="M5.5 5.6 C5.5 4.5 6.2 3.9 7.3 3.9 C8.4 3.9 9.1 4.5 9.1 5.4 C9.1 6.2 8.6 6.5 8.1 6.9 C7.6 7.3 7.4 7.6 7.4 8.4" fill="none" stroke="#fff" stroke-width="1.5"/><rect x="6.6" y="9.2" width="1.6" height="1.4" fill="#fff"/></svg>
<span class="t" style="left:404.00px;top:123px;font-size:11px;line-height:13px;color:#333;letter-spacing:-0.229px;">Ajuda</span>
<svg class="a" style="left:444px;top:121px" width="16" height="16"><defs><linearGradient id="g54" x1="0" y1="0" x2="0" y2="1"><stop offset="0" stop-color="#a9dc9c"/><stop offset="1" stop-color="#62ad52"/></linearGradient></defs><path d="M0.3 8 C0.4 4.5 3 2.2 6 2.1 H9.3 V0.3 L13 3.8 L9.3 7.4 V5.5 H7 C5 5.5 3.9 6.5 3.6 8 Z" fill="url(#g54)" stroke="#4c9a42" stroke-width="0.8" stroke-linejoin="round"/><path d="M15.9 7.8 C15.8 11.3 13.2 13.6 10.2 13.7 H6.8 V15.6 L3.1 12 L6.8 8.4 V10.3 H9.2 C11.2 10.3 12.3 9.3 12.6 7.8 Z" fill="url(#g54)" stroke="#4c9a42" stroke-width="0.8" stroke-linejoin="round"/></svg>
<span class="t" style="left:464.50px;top:123px;font-size:11px;line-height:13px;color:#333;letter-spacing:-0.379px;">Pesquisar</span>
<svg class="a" style="left:522px;top:121px" width="17" height="17"><defs><linearGradient id="g55" x1="0" y1="0" x2="0" y2="1"><stop offset="0" stop-color="#b4ff1a"/><stop offset="0.5" stop-color="#4fe010"/><stop offset="1" stop-color="#18b418"/></linearGradient></defs><path d="M0.5 4.5 L3.5 1.5 H12.5 V15.5 H0.5 Z" fill="#fbfbfb" stroke="#adadad"/><path d="M0.8 4.6 H3.6 V1.8" fill="none" stroke="#c4c4c4" stroke-width="0.8"/><path d="M6 5.5 H11 M2.5 7.5 H11 M2.5 9.5 H6 M2.5 11.5 H6 M2.5 13.5 H7" stroke="#c0c0c0" stroke-width="1"/><path d="M5.3 9.3 H10.3 V7.3 L16 11.5 L10.3 15.7 V13.3 H5.3 Z" fill="url(#g55)" stroke="#1f9a20" stroke-width="0.7" stroke-linejoin="round"/></svg>
<span class="t" style="left:542.50px;top:123px;font-size:11px;line-height:13px;color:#333;letter-spacing:-0.289px;">Executar</span>
<div style="position:absolute;left:515px;top:115px;width:73px;height:23px;border:3px solid #ed1c24;"></div>
<div style="position:absolute;left:281px;top:143px;width:991px;height:22px;background:linear-gradient(#f9f9f9,#f1f1f1 60%,#e4e4e4);"></div>
<div style="position:absolute;left:281px;top:165px;width:991px;height:1px;background:#d0d0d0;"></div>
<div style="position:absolute;left:846px;top:143px;width:1px;height:22px;background:#d0d0d0;"></div>
<div style="position:absolute;left:847px;top:143px;width:1px;height:22px;background:#f4f4f4;"></div>
<div style="position:absolute;left:987px;top:143px;width:1px;height:22px;background:#d0d0d0;"></div>
<div style="position:absolute;left:988px;top:143px;width:1px;height:22px;background:#f4f4f4;"></div>
<div style="position:absolute;left:1129px;top:143px;width:1px;height:22px;background:#d0d0d0;"></div>
<div style="position:absolute;left:1130px;top:143px;width:1px;height:22px;background:#f4f4f4;"></div>
<div style="position:absolute;left:1271px;top:143px;width:1px;height:22px;background:#d0d0d0;"></div>
<div style="position:absolute;left:847px;top:143px;width:140px;height:22px;background:linear-gradient(#ebf3fd 0,#ebf3fd 9px,#d9e8fb 9px,#d9e8fb);"></div>
<div style="position:absolute;left:988px;top:143px;width:141px;height:22px;background:linear-gradient(#ebf3fd 0,#ebf3fd 9px,#d9e8fb 9px,#d9e8fb);"></div>
<span class="t" style="left:287.30px;top:148px;font-size:11px;line-height:13px;color:#000;letter-spacing:-0.285px;">Nome</span>
<span class="t" style="left:853.30px;top:148px;font-size:11px;line-height:13px;color:#000;letter-spacing:-0.354px;">Sigla</span>
<svg class="a" style="left:880px;top:151px" width="7" height="4"><path d="M0 4 L3.5 0 L7 4 Z" fill="#5f8fd0"/></svg>
<span class="t" style="left:994.40px;top:148px;font-size:11px;line-height:13px;color:#000;letter-spacing:-0.377px;">Sequência</span>
<svg class="a" style="left:1047px;top:151px" width="7" height="4"><path d="M0 4 L3.5 0 L7 4 Z" fill="#5f8fd0"/></svg>
<span class="t" style="left:1136.40px;top:148px;font-size:11px;line-height:13px;color:#000;letter-spacing:-0.376px;">Código</span>
<div style="position:absolute;left:281px;top:166px;width:991px;height:417px;background:#fff;"></div>
<div style="position:absolute;left:281px;top:187px;width:991px;height:1px;background:#ededed;"></div>
<span class="t" style="left:287.00px;top:171px;font-size:11px;line-height:13px;color:#000;letter-spacing:-0.402px;">Reservas</span><span class="t" style="left:333.67px;top:171px;font-size:11px;line-height:13px;color:#000;letter-spacing:-0.328px;">Refeições</span><span class="t" style="left:383.06px;top:171px;font-size:11px;line-height:13px;color:#000;letter-spacing:-0.191px;">Colaborador</span>
<span class="t" style="left:853.40px;top:171px;font-size:11px;line-height:13px;color:#000;letter-spacing:-0.518px;">PSW0641</span>
<span class="t" style="left:994.30px;top:171px;font-size:11px;line-height:13px;color:#000;letter-spacing:-0.112px;">2</span>
<span class="t" style="left:1136.00px;top:171px;font-size:11px;line-height:13px;color:#000;letter-spacing:0.055px;">211</span>
<div style="position:absolute;left:281px;top:188px;width:991px;height:20px;background:#fafafa;"></div>
<div style="position:absolute;left:281px;top:208px;width:991px;height:1px;background:#ededed;"></div>
<span class="t" style="left:287.00px;top:192px;font-size:11px;line-height:13px;color:#000;letter-spacing:-0.116px;">Tipos</span><span class="t" style="left:316.35px;top:192px;font-size:11px;line-height:13px;color:#000;letter-spacing:-0.305px;">Refeições</span><span class="t" style="left:365.96px;top:192px;font-size:11px;line-height:13px;color:#000;letter-spacing:-0.292px;">Resumidos</span><span class="t" style="left:421.80px;top:192px;font-size:11px;line-height:13px;color:#000;letter-spacing:-0.167px;">Colaborador</span>
<span class="t" style="left:853.40px;top:192px;font-size:11px;line-height:13px;color:#000;letter-spacing:-0.518px;">PSW0641</span>
<span class="t" style="left:994.30px;top:192px;font-size:11px;line-height:13px;color:#000;letter-spacing:-0.112px;">1</span>
<span class="t" style="left:1136.00px;top:192px;font-size:11px;line-height:13px;color:#000;letter-spacing:-0.217px;">247</span>
<div style="position:absolute;left:281px;top:229px;width:991px;height:1px;background:#ededed;"></div>
<span class="t" style="left:287.00px;top:213px;font-size:11px;line-height:13px;color:#000;letter-spacing:-0.172px;">Valores</span><span class="t" style="left:325.70px;top:213px;font-size:11px;line-height:13px;color:#000;letter-spacing:-0.336px;">Refeições</span><span class="t" style="left:375.01px;top:213px;font-size:11px;line-height:13px;color:#000;letter-spacing:-0.411px;">Reservas</span><span class="t" style="left:421.61px;top:213px;font-size:11px;line-height:13px;color:#000;letter-spacing:-0.200px;">Colaborador</span><span class="t" style="left:483.38px;top:213px;font-size:11px;line-height:13px;color:#000;letter-spacing:0.307px;">-</span><span class="t" style="left:490.77px;top:213px;font-size:11px;line-height:13px;color:#000;letter-spacing:-0.151px;">Diferença</span>
<span class="t" style="left:853.40px;top:213px;font-size:11px;line-height:13px;color:#000;letter-spacing:-0.518px;">PSW0641</span>
<span class="t" style="left:994.30px;top:213px;font-size:11px;line-height:13px;color:#000;letter-spacing:-0.112px;">3</span>
<span class="t" style="left:1136.00px;top:213px;font-size:11px;line-height:13px;color:#000;letter-spacing:-0.217px;">248</span>
<div style="position:absolute;left:281px;top:230px;width:991px;height:20px;background:#fafafa;"></div>
<div style="position:absolute;left:281px;top:250px;width:991px;height:1px;background:#ededed;"></div>
<span class="t" style="left:287.00px;top:234px;font-size:11px;line-height:13px;color:#000;letter-spacing:-0.370px;">Resumo</span><span class="t" style="left:329.17px;top:234px;font-size:11px;line-height:13px;color:#000;letter-spacing:-0.203px;">de</span><span class="t" style="left:344.44px;top:234px;font-size:11px;line-height:13px;color:#000;letter-spacing:-0.324px;">Refeições</span><span class="t" style="left:393.87px;top:234px;font-size:11px;line-height:13px;color:#000;letter-spacing:0.021px;">por</span><span class="t" style="left:413.26px;top:234px;font-size:11px;line-height:13px;color:#000;letter-spacing:-0.140px;">Relógio/Colaborador</span>
<span class="t" style="left:853.40px;top:234px;font-size:11px;line-height:13px;color:#000;letter-spacing:-0.518px;">PSW0641</span>
<span class="t" style="left:994.30px;top:234px;font-size:11px;line-height:13px;color:#000;letter-spacing:-0.112px;">5</span>
<span class="t" style="left:1136.00px;top:234px;font-size:11px;line-height:13px;color:#000;letter-spacing:-0.217px;">213</span>
<div style="position:absolute;left:281px;top:271px;width:991px;height:1px;background:#ededed;"></div>
<span class="t" style="left:287.00px;top:255px;font-size:11px;line-height:13px;color:#000;letter-spacing:-0.121px;">Tipos</span><span class="t" style="left:316.33px;top:255px;font-size:11px;line-height:13px;color:#000;letter-spacing:-0.310px;">Refeições</span><span class="t" style="left:365.89px;top:255px;font-size:11px;line-height:13px;color:#000;letter-spacing:-0.260px;">Resumido</span><span class="t" style="left:416.77px;top:255px;font-size:11px;line-height:13px;color:#000;letter-spacing:-0.152px;">Empresa/Colaborador</span>
<span class="t" style="left:853.40px;top:255px;font-size:11px;line-height:13px;color:#000;letter-spacing:-0.518px;">PSW0641</span>
<span class="t" style="left:994.30px;top:255px;font-size:11px;line-height:13px;color:#000;letter-spacing:-0.112px;">4</span>
<span class="t" style="left:1136.00px;top:255px;font-size:11px;line-height:13px;color:#000;letter-spacing:-0.217px;">249</span>
<div style="position:absolute;left:281px;top:272px;width:991px;height:20px;background:#fafafa;"></div>
<div style="position:absolute;left:281px;top:292px;width:991px;height:1px;background:#ededed;"></div>
<span class="t" style="left:287.00px;top:276px;font-size:11px;line-height:13px;color:#000;letter-spacing:-0.344px;">Resumo</span><span class="t" style="left:329.34px;top:276px;font-size:11px;line-height:13px;color:#000;letter-spacing:-0.180px;">de</span><span class="t" style="left:344.66px;top:276px;font-size:11px;line-height:13px;color:#000;letter-spacing:-0.304px;">Refeições</span><span class="t" style="left:394.29px;top:276px;font-size:11px;line-height:13px;color:#000;letter-spacing:-0.086px;">do</span><span class="t" style="left:409.80px;top:276px;font-size:11px;line-height:13px;color:#000;letter-spacing:-0.228px;">Relógio</span>
<span class="t" style="left:853.40px;top:276px;font-size:11px;line-height:13px;color:#000;letter-spacing:-0.518px;">PSW0641</span>
<span class="t" style="left:994.30px;top:276px;font-size:11px;line-height:13px;color:#000;letter-spacing:-0.292px;">15</span>
<span class="t" style="left:1136.00px;top:276px;font-size:11px;line-height:13px;color:#000;letter-spacing:-0.217px;">210</span>
<div style="position:absolute;left:281px;top:313px;width:991px;height:1px;background:#ededed;"></div>
<span class="t" style="left:287.00px;top:297px;font-size:11px;line-height:13px;color:#000;letter-spacing:-0.353px;">Resumo</span><span class="t" style="left:329.28px;top:297px;font-size:11px;line-height:13px;color:#000;letter-spacing:-0.188px;">de</span><span class="t" style="left:344.58px;top:297px;font-size:11px;line-height:13px;color:#000;letter-spacing:-0.311px;">Refeições</span><span class="t" style="left:394.14px;top:297px;font-size:11px;line-height:13px;color:#000;letter-spacing:-0.308px;">Geral</span>
<span class="t" style="left:853.40px;top:297px;font-size:11px;line-height:13px;color:#000;letter-spacing:-0.518px;">PSW0641</span>
<span class="t" style="left:994.30px;top:297px;font-size:11px;line-height:13px;color:#000;letter-spacing:-0.292px;">25</span>
<span class="t" style="left:1136.00px;top:297px;font-size:11px;line-height:13px;color:#000;letter-spacing:-0.217px;">212</span>
<div style="position:absolute;left:281px;top:314px;width:991px;height:20px;background:#fafafa;"></div>
<div style="position:absolute;left:281px;top:334px;width:991px;height:1px;background:#ededed;"></div>
<span class="t" style="left:287.00px;top:318px;font-size:11px;line-height:13px;color:#000;letter-spacing:-0.157px;">Valores</span><span class="t" style="left:325.81px;top:318px;font-size:11px;line-height:13px;color:#000;letter-spacing:-0.322px;">Refeições</span><span class="t" style="left:375.26px;top:318px;font-size:11px;line-height:13px;color:#000;letter-spacing:-0.395px;">Reservas</span><span class="t" style="left:421.99px;top:318px;font-size:11px;line-height:13px;color:#000;letter-spacing:-0.185px;">Colaborador</span>
<span class="t" style="left:853.40px;top:318px;font-size:11px;line-height:13px;color:#000;letter-spacing:-0.518px;">PSW0641</span>
<span class="t" style="left:994.30px;top:318px;font-size:11px;line-height:13px;color:#000;letter-spacing:-0.112px;">6</span>
<span class="t" style="left:1136.00px;top:318px;font-size:11px;line-height:13px;color:#000;letter-spacing:-0.217px;">250</span>
<div style="position:absolute;left:281px;top:355px;width:991px;height:1px;background:#ededed;"></div>
<span class="t" style="left:287.00px;top:339px;font-size:11px;line-height:13px;color:#000;letter-spacing:-0.307px;">Refeições</span><span class="t" style="left:336.59px;top:339px;font-size:11px;line-height:13px;color:#000;letter-spacing:0.039px;">por</span><span class="t" style="left:356.05px;top:339px;font-size:11px;line-height:13px;color:#000;letter-spacing:-0.019px;">Setor/Data</span><span class="t" style="left:411.89px;top:339px;font-size:11px;line-height:13px;color:#000;letter-spacing:0.329px;">-</span><span class="t" style="left:419.33px;top:339px;font-size:11px;line-height:13px;color:#000;letter-spacing:-0.108px;">Detalhado</span>
<span class="t" style="left:853.40px;top:339px;font-size:11px;line-height:13px;color:#000;letter-spacing:-0.518px;">PSW0651</span>
<span class="t" style="left:994.30px;top:339px;font-size:11px;line-height:13px;color:#000;letter-spacing:-0.112px;">1</span>
<span class="t" style="left:1136.00px;top:339px;font-size:11px;line-height:13px;color:#000;letter-spacing:-0.217px;">297</span>
<div style="position:absolute;left:281px;top:356px;width:991px;height:20px;background:#fafafa;"></div>
<div style="position:absolute;left:281px;top:376px;width:991px;height:1px;background:#ededed;"></div>
<span class="t" style="left:287.00px;top:360px;font-size:11px;line-height:13px;color:#000;letter-spacing:-0.316px;">Refeições</span><span class="t" style="left:336.51px;top:360px;font-size:11px;line-height:13px;color:#000;letter-spacing:0.030px;">por</span><span class="t" style="left:355.94px;top:360px;font-size:11px;line-height:13px;color:#000;letter-spacing:-0.027px;">Setor/Data</span><span class="t" style="left:411.69px;top:360px;font-size:11px;line-height:13px;color:#000;letter-spacing:0.323px;">-</span><span class="t" style="left:419.11px;top:360px;font-size:11px;line-height:13px;color:#000;letter-spacing:-0.266px;">Resumido</span>
<span class="t" style="left:853.40px;top:360px;font-size:11px;line-height:13px;color:#000;letter-spacing:-0.518px;">PSW0651</span>
<span class="t" style="left:994.30px;top:360px;font-size:11px;line-height:13px;color:#000;letter-spacing:-0.112px;">2</span>
<span class="t" style="left:1136.00px;top:360px;font-size:11px;line-height:13px;color:#000;letter-spacing:-0.217px;">298</span>
<div style="position:absolute;left:281px;top:397px;width:991px;height:1px;background:#ededed;"></div>
<span class="t" style="left:287.00px;top:381px;font-size:11px;line-height:13px;color:#000;letter-spacing:-0.334px;">Refeições</span><span class="t" style="left:336.33px;top:381px;font-size:11px;line-height:13px;color:#000;letter-spacing:0.010px;">por</span><span class="t" style="left:355.68px;top:381px;font-size:11px;line-height:13px;color:#000;letter-spacing:0.051px;">Setor/Data/Turno</span><span class="t" style="left:443.89px;top:381px;font-size:11px;line-height:13px;color:#000;letter-spacing:0.308px;">-</span><span class="t" style="left:451.28px;top:381px;font-size:11px;line-height:13px;color:#000;letter-spacing:-0.288px;">Resumido</span>
<span class="t" style="left:853.40px;top:381px;font-size:11px;line-height:13px;color:#000;letter-spacing:-0.518px;">PSW0651</span>
<span class="t" style="left:994.30px;top:381px;font-size:11px;line-height:13px;color:#000;letter-spacing:-0.112px;">3</span>
<span class="t" style="left:1136.00px;top:381px;font-size:11px;line-height:13px;color:#000;letter-spacing:-0.217px;">299</span>
<div style="position:absolute;left:281px;top:398px;width:991px;height:20px;background:#fafafa;"></div>
<div style="position:absolute;left:281px;top:418px;width:991px;height:1px;background:#ededed;"></div>
<span class="t" style="left:287.00px;top:402px;font-size:11px;line-height:13px;color:#000;letter-spacing:0.052px;">Totais</span><span class="t" style="left:319.46px;top:402px;font-size:11px;line-height:13px;color:#000;letter-spacing:-0.346px;">Refeições</span><span class="t" style="left:368.68px;top:402px;font-size:11px;line-height:13px;color:#000;">por</span><span class="t" style="left:387.98px;top:402px;font-size:11px;line-height:13px;color:#000;letter-spacing:-0.182px;">Data</span>
<span class="t" style="left:853.40px;top:402px;font-size:11px;line-height:13px;color:#000;letter-spacing:-0.518px;">PSW0651</span>
<span class="t" style="left:994.30px;top:402px;font-size:11px;line-height:13px;color:#000;letter-spacing:-0.292px;">31</span>
<span class="t" style="left:1136.00px;top:402px;font-size:11px;line-height:13px;color:#000;letter-spacing:-0.217px;">273</span>
<div style="position:absolute;left:281px;top:439px;width:991px;height:1px;background:#ededed;"></div>
<span class="t" style="left:287.00px;top:423px;font-size:11px;line-height:13px;color:#000;letter-spacing:-0.304px;">Consumo</span><span class="t" style="left:335.39px;top:423px;font-size:11px;line-height:13px;color:#000;letter-spacing:-0.336px;">e</span><span class="t" style="left:344.61px;top:423px;font-size:11px;line-height:13px;color:#000;letter-spacing:-0.352px;">Reserva</span><span class="t" style="left:386.55px;top:423px;font-size:11px;line-height:13px;color:#000;letter-spacing:-0.187px;">de</span><span class="t" style="left:401.85px;top:423px;font-size:11px;line-height:13px;color:#000;letter-spacing:-0.310px;">Refeições</span><span class="t" style="left:451.41px;top:423px;font-size:11px;line-height:13px;color:#000;letter-spacing:0.035px;">por</span><span class="t" style="left:470.86px;top:423px;font-size:11px;line-height:13px;color:#000;letter-spacing:-0.172px;">Colaborador</span>
<span class="t" style="left:853.40px;top:423px;font-size:11px;line-height:13px;color:#000;letter-spacing:-0.518px;">PSW0651</span>
<span class="t" style="left:994.30px;top:423px;font-size:11px;line-height:13px;color:#000;letter-spacing:-0.112px;">4</span>
<span class="t" style="left:1136.00px;top:423px;font-size:11px;line-height:13px;color:#000;letter-spacing:-0.217px;">300</span>
<div style="position:absolute;left:281px;top:440px;width:991px;height:20px;background:#fafafa;"></div>
<div style="position:absolute;left:281px;top:460px;width:991px;height:1px;background:#ededed;"></div>
<span class="t" style="left:287.00px;top:444px;font-size:11px;line-height:13px;color:#000;letter-spacing:-0.355px;">Reserva</span><span class="t" style="left:328.91px;top:444px;font-size:11px;line-height:13px;color:#000;letter-spacing:-0.191px;">de</span><span class="t" style="left:344.21px;top:444px;font-size:11px;line-height:13px;color:#000;letter-spacing:-0.313px;">Refeições</span><span class="t" style="left:393.74px;top:444px;font-size:11px;line-height:13px;color:#000;letter-spacing:-0.291px;">sem</span><span class="t" style="left:417.09px;top:444px;font-size:11px;line-height:13px;color:#000;letter-spacing:-0.308px;">Consumo</span><span class="t" style="left:465.45px;top:444px;font-size:11px;line-height:13px;color:#000;letter-spacing:0.033px;">por</span><span class="t" style="left:484.89px;top:444px;font-size:11px;line-height:13px;color:#000;letter-spacing:-0.175px;">Colaborador</span>
<span class="t" style="left:853.40px;top:444px;font-size:11px;line-height:13px;color:#000;letter-spacing:-0.518px;">PSW0651</span>
<span class="t" style="left:994.30px;top:444px;font-size:11px;line-height:13px;color:#000;letter-spacing:-0.112px;">5</span>
<span class="t" style="left:1136.00px;top:444px;font-size:11px;line-height:13px;color:#000;letter-spacing:-0.217px;">301</span>
<div style="position:absolute;left:281px;top:481px;width:991px;height:1px;background:#ededed;"></div>
<span class="t" style="left:287.00px;top:465px;font-size:11px;line-height:13px;color:#000;letter-spacing:-0.353px;">Reserva</span><span class="t" style="left:328.93px;top:465px;font-size:11px;line-height:13px;color:#000;letter-spacing:-0.188px;">de</span><span class="t" style="left:344.23px;top:465px;font-size:11px;line-height:13px;color:#000;letter-spacing:-0.311px;">Refeições</span><span class="t" style="left:393.78px;top:465px;font-size:11px;line-height:13px;color:#000;letter-spacing:-0.134px;">em</span><span class="t" style="left:412.23px;top:465px;font-size:11px;line-height:13px;color:#000;letter-spacing:-0.132px;">H.Extra</span><span class="t" style="left:451.43px;top:465px;font-size:11px;line-height:13px;color:#000;letter-spacing:0.034px;">por</span><span class="t" style="left:470.87px;top:465px;font-size:11px;line-height:13px;color:#000;letter-spacing:-0.173px;">Colaborador</span>
<span class="t" style="left:853.40px;top:465px;font-size:11px;line-height:13px;color:#000;letter-spacing:-0.518px;">PSW0651</span>
<span class="t" style="left:994.30px;top:465px;font-size:11px;line-height:13px;color:#000;letter-spacing:-0.112px;">6</span>
<span class="t" style="left:1136.00px;top:465px;font-size:11px;line-height:13px;color:#000;letter-spacing:-0.217px;">302</span>
<div style="position:absolute;left:280px;top:583px;width:992px;height:1px;background:#99bbe8;"></div>
<div style="position:absolute;left:280px;top:584px;width:993px;height:68px;background:#fff;"></div>
<span class="t" style="left:330.30px;top:594px;font-size:12px;line-height:14px;color:#000;letter-spacing:-0.259px;">Descrição:</span>
<div style="position:absolute;left:390px;top:589px;width:876px;height:56px;border:1px solid #b5b8c8;background:#efefef;"></div>
<span class="t" style="left:394.00px;top:592px;font-size:12px;line-height:14px;color:#a0a0a0;letter-spacing:-0.337px;">Selecione</span><span class="t" style="left:447.41px;top:592px;font-size:12px;line-height:14px;color:#a0a0a0;letter-spacing:0.021px;">um</span><span class="t" style="left:467.86px;top:592px;font-size:12px;line-height:14px;color:#a0a0a0;letter-spacing:0.006px;">registro</span><span class="t" style="left:511.66px;top:592px;font-size:12px;line-height:14px;color:#a0a0a0;letter-spacing:-0.138px;">para</span><span class="t" style="left:538.87px;top:592px;font-size:12px;line-height:14px;color:#a0a0a0;letter-spacing:-0.014px;">exibir</span><span class="t" style="left:571.21px;top:592px;font-size:12px;line-height:14px;color:#a0a0a0;letter-spacing:-0.357px;">sua</span><span class="t" style="left:593.23px;top:592px;font-size:12px;line-height:14px;color:#a0a0a0;letter-spacing:-0.255px;">descrição</span><span class="t" style="left:646.03px;top:592px;font-size:12px;line-height:14px;color:#a0a0a0;letter-spacing:0.635px;">!</span>
<div style="position:absolute;left:281px;top:652px;width:991px;height:26px;background:linear-gradient(#e1eaf6,#d0def0);"></div>
<span class="t" style="left:1190.00px;top:659px;font-size:11px;line-height:13px;color:#333;font-weight:bold;letter-spacing:0.769px;">15</span><span class="t" style="left:1206.94px;top:659px;font-size:11px;line-height:13px;color:#333;font-weight:bold;letter-spacing:0.333px;">registro(s)</span>
<div style="position:absolute;left:5px;top:681px;width:1268px;height:32px;border:1px solid #99bbe8;border-top:1px solid #99bbe8;background:linear-gradient(#e1eaf6,#d0def0);"></div>
<div style="position:absolute;left:8px;top:691px;width:1px;height:14px;background:#9cc6fb;"></div>
<div style="position:absolute;left:9px;top:691px;width:1px;height:14px;background:#fff;"></div>
<span class="t" style="left:16.20px;top:692px;font-size:11px;line-height:13px;color:#333;letter-spacing:-0.214px;">Ponto</span><span class="t" style="left:47.30px;top:692px;font-size:11px;line-height:13px;color:#333;letter-spacing:-0.099px;">Soft</span><span class="t" style="left:69.90px;top:692px;font-size:11px;line-height:13px;color:#333;letter-spacing:-0.140px;">Enterprise</span><span class="t" style="left:122.06px;top:692px;font-size:11px;line-height:13px;color:#333;letter-spacing:0.309px;">-</span><span class="t" style="left:129.45px;top:692px;font-size:11px;line-height:13px;color:#333;letter-spacing:0.030px;">6.3.0.2</span>
<div style="position:absolute;left:170px;top:691px;width:1px;height:14px;background:#9cc6fb;"></div>
<div style="position:absolute;left:171px;top:691px;width:1px;height:14px;background:#fff;"></div>
<span class="t" style="left:178.20px;top:692px;font-size:11px;line-height:13px;color:#333;letter-spacing:-0.073px;">Copyright</span><span class="t" style="left:228.05px;top:692px;font-size:11px;line-height:13px;color:#333;letter-spacing:0.214px;">(c)</span><span class="t" style="left:244.96px;top:692px;font-size:11px;line-height:13px;color:#333;letter-spacing:-0.075px;">2000-2022</span><span class="t" style="left:300.32px;top:692px;font-size:11px;line-height:13px;color:#333;letter-spacing:0.172px;">Insoft4</span><span class="t" style="left:337.98px;top:692px;font-size:11px;line-height:13px;color:#333;letter-spacing:0.109px;">Informática</span><span class="t" style="left:397.03px;top:692px;font-size:11px;line-height:13px;color:#333;letter-spacing:-0.111px;">Ltda</span>
<div style="position:absolute;left:425px;top:691px;width:1px;height:14px;background:#9cc6fb;"></div>
<div style="position:absolute;left:426px;top:691px;width:1px;height:14px;background:#fff;"></div>
<div style="position:absolute;left:1115px;top:691px;width:1px;height:14px;background:#9cc6fb;"></div>
<div style="position:absolute;left:1116px;top:691px;width:1px;height:14px;background:#fff;"></div>
<div style="position:absolute;left:1119px;top:682px;width:2px;height:32px;background:#99bbe8;"></div>
<svg class="a" style="left:0;top:0" width="1280" height="720"><g transform="translate(1131.1 698) scale(0.4824) translate(-25.1 -30.5)"><path fill="#f58220" d="M30.3 19.9 C34 20.3 38.3 21.8 41.2 24.7 A17.6 16.7 0 0 1 20.6 46.7 L26.6 35.4 C20 35.4 13 34.8 7.72 32.4 A17 16.7 0 0 1 21.9 13.91 C17 19 13.4 25 12.1 31.2 C17 32.2 23 32.5 28.3 32.5 C29.5 28 30.1 24 30.3 19.9 Z"/><path fill="#1f4579" d="M18.4 19.4 C20.5 16.5 23.5 14.2 27 13.86 A17.6 16.7 0 0 1 40.94 24.2 C38 20.8 33 19 27.5 18.3 C24 18 21 18.5 18.4 19.4 Z"/><path fill="#1f4579" d="M7.86 33.3 C13 35.4 19 36.1 25.6 36.1 C24.5 40 22.5 43.5 19.8 46.42 A17 16.7 0 0 1 7.86 33.3 Z"/></g><circle cx="1150.30" cy="697.85" r="6.77" fill="none" stroke="#f58220" stroke-width="2.85"/><rect x="1142.1" y="695.85" width="2.85" height="16.75" fill="#f58220"/><circle cx="1169.35" cy="697.85" r="6.77" fill="none" stroke="#f58220" stroke-width="2.85"/><path fill="none" stroke="#f58220" stroke-width="2.85" d="M1182 705.7 V696.6 a5.5 5.5 0 0 1 11 0 V705.7"/><path fill="none" stroke="#f58220" stroke-width="2.85" d="M1199.5 686.7 V700.4 a3.9 3.9 0 0 0 3.9 3.9 h1.4"/><rect x="1198.1" y="689.8" width="6.7" height="2.8" fill="#f58220"/><circle cx="1214.65" cy="697.85" r="6.77" fill="none" stroke="#f58220" stroke-width="2.85"/><path fill="none" stroke="#00548a" stroke-width="2.85" d="M1234 691.2 h-1 a4 4 0 0 0 -4 4 v5.3 a4 4 0 0 1 -4 4 h-3"/><circle cx="1243.65" cy="697.85" r="6.77" fill="none" stroke="#00548a" stroke-width="2.85"/><path fill="none" stroke="#00548a" stroke-width="2.85" d="M1256.45 705.7 V688.2 a4 4 0 0 1 4 -4 h0.6"/><rect x="1255" y="689.8" width="6" height="2.8" fill="#00548a"/><path fill="none" stroke="#00548a" stroke-width="2.85" d="M1265.25 686.3 V700.4 a3.9 3.9 0 0 0 3.9 3.9 h1.1"/><rect x="1263.8" y="689.8" width="6.4" height="2.8" fill="#00548a"/><circle cx="1272.3" cy="690.9" r="1.2" fill="none" stroke="#4b7fa8" stroke-width="0.6"/><text x="1221.4" y="712.7" font-family="Liberation Sans,sans-serif" font-size="6.3" font-weight="bold" fill="#27507f" textLength="48.8" lengthAdjust="spacingAndGlyphs">Ponto Eletrônico</text></svg>
</body></html>
